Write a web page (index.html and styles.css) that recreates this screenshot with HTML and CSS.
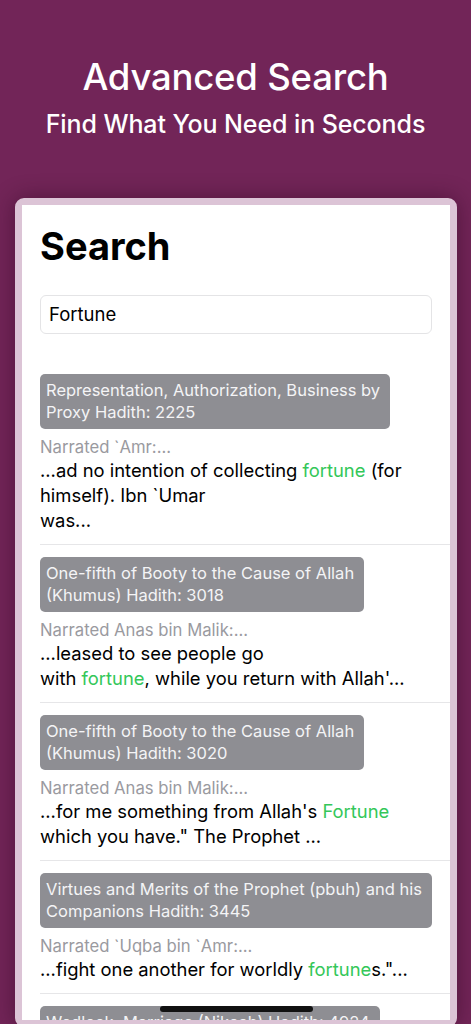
FILE: index.html
```html
<!DOCTYPE html>
<html lang="en">
<head>
<meta charset="utf-8">
<title>Advanced Search</title>
<link rel="stylesheet" href="styles.css">
</head>
<body>
<div class="page">
  <header class="hero">
    <h1 class="hero-title">Advanced Search</h1>
    <p class="hero-sub">Find What You Need in Seconds</p>
  </header>
  <div class="device">
    <div class="screen">
      <h2 class="large-title">Search</h2>
      <div class="search-field">Fortune</div>
      <ul class="results">
        <li class="result">
          <div class="badge">Representation, Authorization, Business by<br>Proxy Hadith: 2225</div>
          <div class="narrator">Narrated `Amr:...</div>
          <div class="snippet">...ad no intention of collecting <span class="hl">fortune</span> (for<br>himself). Ibn `Umar<br>was...</div>
        </li>
        <li class="result">
          <div class="badge">One-fifth of Booty to the Cause of Allah<br>(Khumus) Hadith: 3018</div>
          <div class="narrator">Narrated Anas bin Malik:...</div>
          <div class="snippet">...leased to see people go<br>with <span class="hl">fortune</span>, while you return with Allah'...</div>
        </li>
        <li class="result">
          <div class="badge">One-fifth of Booty to the Cause of Allah<br>(Khumus) Hadith: 3020</div>
          <div class="narrator">Narrated Anas bin Malik:...</div>
          <div class="snippet">...for me something from Allah's <span class="hl">Fortune</span><br>which you have." The Prophet ...</div>
        </li>
        <li class="result">
          <div class="badge">Virtues and Merits of the Prophet (pbuh) and his<br>Companions Hadith: 3445</div>
          <div class="narrator">Narrated `Uqba bin `Amr:...</div>
          <div class="snippet">...fight one another for worldly <span class="hl">fortune</span>s."...</div>
        </li>
        <li class="result">
          <div class="badge">Wedlock, Marriage (Nikaah) Hadith: 4924<br>&nbsp;</div>
          <div class="narrator">Narrated ...</div>
        </li>
      </ul>
      <div class="home-indicator"></div>
    </div>
  </div>
</div>
</body>
</html>
```
FILE: styles.css
```css
* { box-sizing: border-box; }
html, body { margin: 0; padding: 0; }
body {
  background: #722558;
  font-family: Inter, "Liberation Sans", sans-serif;
  width: 471px;
  height: 1024px;
  overflow: hidden;
}
.page {
  display: flex;
  flex-direction: column;
  height: 1024px;
}
.hero {
  text-align: center;
  color: #ffffff;
  padding-top: 54px;
  height: 198px;
  flex-shrink: 0;
}
.hero-title {
  margin: 0;
  font-size: 36.5px;
  font-weight: 500;
  line-height: 46px;
  letter-spacing: -0.2px;
}
.hero-sub {
  margin: 9px 0 0;
  font-size: 25px;
  font-weight: 500;
  line-height: 30px;
  letter-spacing: -0.1px;
}
.device {
  margin: 0 14px 0 15px;
  height: 829px;
  border: 7px solid #dcc4d6;
  border-radius: 9px;
  background: #dcc4d6;
  box-shadow: 0 0 22px rgba(40, 0, 25, 0.45);
  flex-shrink: 0;
}
.screen {
  position: relative;
  background: #ffffff;
  height: 100%;
  overflow: hidden;
  padding: 0 0 0 18px;
}
.large-title {
  margin: 0;
  padding-top: 18px;
  font-size: 38px;
  font-weight: 700;
  line-height: 46px;
  color: #000;
  letter-spacing: 0;
}
.search-field {
  margin: 26px 18px 0 0;
  height: 39px;
  border: 1px solid #e4e4e6;
  border-radius: 6px;
  padding: 0 8px;
  font-size: 18.5px;
  line-height: 37px;
  color: #000;
}
.results {
  list-style: none;
  margin: 40px 0 0;
  padding: 0;
}
.result {
  padding: 0 0 11px;
  border-bottom: 1px solid #e6e6e8;
}
.result + .result {
  padding-top: 12px;
}
.badge {
  display: inline-block;
  background: #8e8e93;
  color: #f4f4f6;
  border-radius: 5px;
  padding: 5px 10px 6px 6px;
  font-size: 16.5px;
  line-height: 22px;
}
.narrator {
  margin-top: 7px;
  color: #9a9a9f;
  font-size: 16.7px;
  line-height: 22px;
}
.snippet {
  color: #000;
  font-size: 18.4px;
  line-height: 25px;
}
.hl { color: #34c759; }
.home-indicator {
  position: absolute;
  left: 138px;
  top: 801px;
  width: 153px;
  height: 6px;
  border-radius: 3px;
  background: #111;
}
```
